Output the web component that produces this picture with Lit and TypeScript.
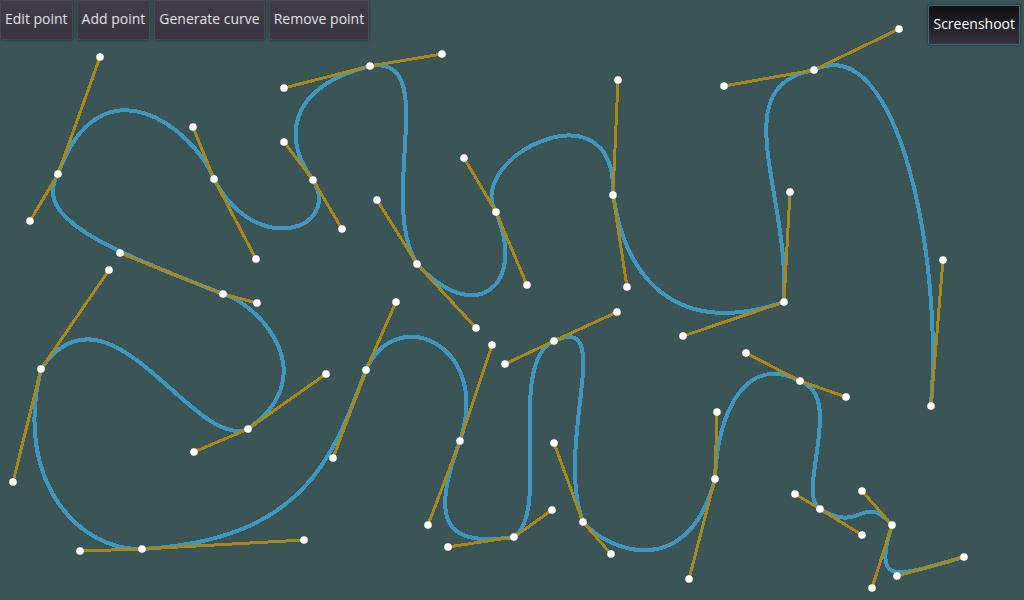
import { LitElement, html, svg, css } from "lit";
import { customElement, property } from "lit/decorators.js";

type Point = [number, number];

interface CurveNode {
  at: Point;
  before?: Point;
  after?: Point;
}

const NODES: CurveNode[] = [
  { at: [931, 406], after: [943, 260] },
  { before: [899, 29], at: [814, 70], after: [724, 86] },
  { before: [790, 192], at: [784, 302], after: [683, 336] },
  { before: [627, 287], at: [613, 195], after: [618, 80] },
  { before: [464, 158], at: [496, 212], after: [527, 285] },
  { before: [476, 328], at: [417, 264], after: [377, 200] },
  { before: [442, 54], at: [370, 66], after: [284, 88] },
  { before: [284, 142], at: [313, 180], after: [342, 229] },
  { before: [256, 259], at: [214, 179], after: [193, 127] },
  { before: [100, 57], at: [58, 174], after: [30, 221] },
  { before: [120, 253], at: [223, 294], after: [257, 303] },
  { before: [326, 374], at: [248, 429], after: [194, 452] },
  { before: [109, 270], at: [41, 369], after: [13, 482] },
  { before: [80, 551], at: [142, 549], after: [304, 540] },
  { before: [333, 458], at: [366, 370], after: [396, 302] },
  { before: [492, 345], at: [460, 441], after: [428, 525] },
  { before: [448, 547], at: [514, 537], after: [552, 510] },
  { before: [505, 364], at: [554, 341], after: [617, 312] },
  { before: [554, 443], at: [583, 522], after: [611, 554] },
  { before: [689, 579], at: [715, 479], after: [717, 412] },
  { before: [746, 353], at: [800, 381], after: [846, 397] },
  { before: [795, 494], at: [820, 509], after: [862, 535] },
  { before: [862, 491], at: [892, 525], after: [872, 588] },
  { before: [897, 576], at: [964, 557] },
];

@customElement("curve-canvas")
export class CurveCanvas extends LitElement {
  @property({ attribute: false }) nodes: CurveNode[] = [];

  static styles = css`
    :host {
      display: grid;
    }
    .canvas {
      display: block;
      width: 100%;
      height: 100%;
    }
    .curve,
    .handle {
      fill: none;
      shape-rendering: crispEdges;
    }
    .curve {
      stroke: #3f97bf;
      stroke-width: 4;
    }
    .handle {
      stroke: #a6881c;
      stroke-width: 3;
    }
    .knob {
      fill: #ffffff;
    }
  `;

  private get path(): string {
    return this.nodes
      .map((node, i) =>
        i === 0 ? `M${node.at}` : `C${this.nodes[i - 1].after} ${node.before} ${node.at}`
      )
      .join(" ");
  }

  render() {
    const arms = this.nodes.flatMap((node) =>
      [node.before, node.after]
        .filter((end): end is Point => !!end)
        .map((end) => ({ from: node.at, end }))
    );
    const knobs = [...arms.map((arm) => arm.end), ...this.nodes.map((node) => node.at)];
    return html`
      <svg class="canvas" role="img" aria-label="Bezier curve">
        <path class="curve" d=${this.path} />
        ${arms.map(
          ({ from, end }) =>
            svg`<line class="handle" x1=${from[0]} y1=${from[1]} x2=${end[0]} y2=${end[1]} />`
        )}
        ${knobs.map(([x, y]) => svg`<circle class="knob" cx=${x} cy=${y} r="3.8" />`)}
      </svg>
    `;
  }
}

@customElement("app-root")
export class AppRoot extends LitElement {
  static styles = css`
    :host {
      display: grid;
      min-height: 100vh;
      background: #3b5455;
      overflow: hidden;
    }
    .surface,
    .bar {
      grid-area: 1 / 1;
    }
    .bar {
      z-index: 1;
      align-self: start;
      display: flex;
      justify-content: space-between;
      align-items: flex-start;
      padding: 0 4px 0 0;
    }
    .tools {
      display: flex;
      gap: 4px;
    }
    .button {
      box-sizing: border-box;
      height: 40px;
      margin: 0;
      padding: 0 4px 2px;
      border: 1px solid #4a4652;
      border-radius: 2px;
      background: linear-gradient(#403d48, #383540);
      box-shadow: 0 0 3px rgba(0, 0, 0, 0.5);
      color: #e0e0e0;
      font: 14px/20px "Open Sans", "Noto Sans", sans-serif;
      white-space: nowrap;
    }
    .shot {
      margin-top: 5px;
      border-color: #4a6580;
      background: linear-gradient(#0f0e12, #35323d);
      color: #ffffff;
    }
  `;

  render() {
    return html`
      <curve-canvas class="surface" .nodes=${NODES}></curve-canvas>
      <div class="bar">
        <div class="tools">
          <button class="button" type="button">Edit point</button>
          <button class="button" type="button">Add point</button>
          <button class="button" type="button">Generate curve</button>
          <button class="button" type="button">Remove point</button>
        </div>
        <button class="button shot" type="button">Screenshoot</button>
      </div>
    `;
  }
}
